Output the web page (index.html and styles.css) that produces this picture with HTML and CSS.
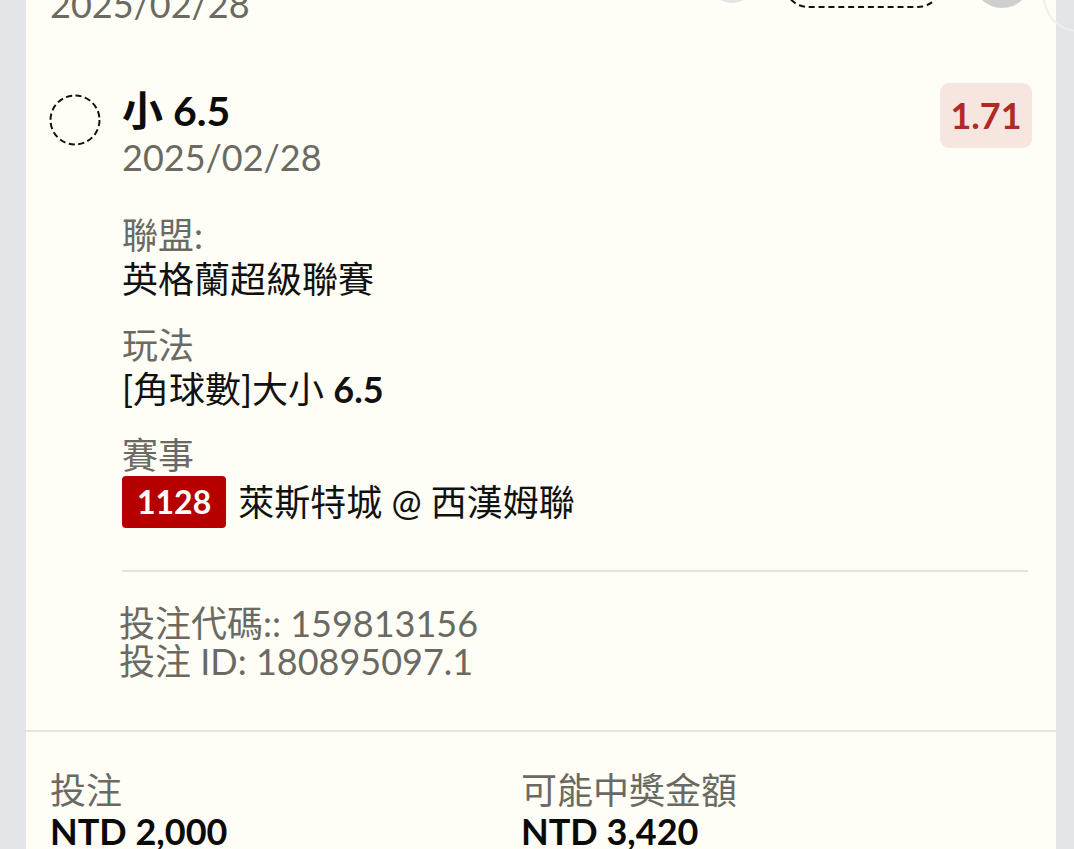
FILE: index.html
```html
<!DOCTYPE html>
<html lang="zh-Hant">
<head>
<meta charset="utf-8">
<link rel="stylesheet" href="styles.css">
</head>
<body>
<div class="page">
  <div class="card">
    <div class="prev">
      <div class="prev-date">2025/02/28</div>
    </div>

    <div class="bet">
      <svg class="check" width="52" height="52" viewBox="0 0 52 52" aria-hidden="true">
        <circle cx="26" cy="26" r="24.5" fill="none" stroke="#111" stroke-width="2" stroke-dasharray="6.2 3.4"/>
      </svg>
      <div class="bet-head">
        <div class="bet-title">小 6.5</div>
        <div class="bet-date">2025/02/28</div>
      </div>
      <div class="odds">1.71</div>

      <div class="bet-body">
        <div class="fields">
          <div class="field">
            <div class="label">聯盟:</div>
            <div class="value">英格蘭超級聯賽</div>
          </div>
          <div class="field">
            <div class="label">玩法</div>
            <div class="value">[角球數]大小 <b>6.5</b></div>
          </div>
          <div class="field">
            <div class="label">賽事</div>
            <div class="value match"><span class="match-no">1128</span><span>萊斯特城 @ 西漢姆聯</span></div>
          </div>
        </div>

        <div class="divider"></div>

        <div class="codes">
          <div>投注代碼:: 159813156</div>
          <div>投注 ID: 180895097.1</div>
        </div>
      </div>
    </div>

    <div class="summary">
      <div class="sum-col">
        <div class="label">投注</div>
        <div class="amount">NTD 2,000</div>
      </div>
      <div class="sum-col">
        <div class="label">可能中獎金額</div>
        <div class="amount">NTD 3,420</div>
      </div>
    </div>
  </div>

  <div class="float-bar">
    <span class="fb-circle fb-light"></span>
    <span class="fb-pill"></span>
    <span class="fb-circle fb-dark"></span>
    <span class="fb-ring"></span>
  </div>
</div>
</body>
</html>
```

FILE: styles.css
```css
* { box-sizing: border-box; }
html, body {
  margin: 0;
  padding: 0;
  background: #e4e5e8;
  overflow: hidden;
}
body {
  font-family: Lato, "Noto Sans CJK TC", sans-serif;
  color: #111;
}
.page {
  position: relative;
  width: 1074px;
  height: 849px;
  overflow: hidden;
}
.card {
  margin: -22px 18px 0 26px;
  background: #fefdf6;
  height: 1000px;
}
.prev {
  padding: 0 24px;
  height: 109px;
}
.prev-date {
  font-size: 36px;
  line-height: 44px;
  color: #6a6a62;
  padding-top: 4px;
}
.bet {
  display: grid;
  grid-template-columns: 52px 1fr auto;
  column-gap: 20px;
  align-items: start;
  padding: 0 24px 0 23px;
}
.check {
  display: block;
  margin-top: 7px;
}
.bet-head {
  min-width: 0;
  padding-left: 1px;
}
.bet-title {
  font-size: 41px;
  font-weight: 700;
  line-height: 48px;
  color: #0c0c0c;
}
.bet-date {
  font-size: 36px;
  line-height: 44px;
  color: #6a6a62;
}
.bet-body {
  grid-column: 2 / 4;
  padding-left: 1px;
  padding-bottom: 50px;
}
.fields {
  margin-top: 35px;
  display: flex;
  flex-direction: column;
  gap: 24px;
}
.label {
  font-size: 36px;
  line-height: 42px;
  color: #6a6a62;
}
.field .label {
  margin-bottom: 2px;
}
.value {
  font-size: 36px;
  line-height: 42px;
  color: #111;
}
.value b { font-weight: 700; }
.match {
  display: flex;
  align-items: center;
  gap: 12px;
  margin-top: -2px;
}
.match-no {
  background: #b60000;
  color: #fff;
  font-weight: 700;
  font-size: 32px;
  line-height: 52px;
  padding: 0 15px;
  border-radius: 4px;
}
.divider {
  height: 2px;
  background: #e4e2dc;
  margin: 42px 4px 0 0;
}
.codes {
  margin-top: 32px;
  margin-left: -3px;
  font-size: 36px;
  line-height: 38px;
  color: #6a6a62;
}
.odds {
  margin-top: -4px;
  background: #f6e6df;
  color: #b02a25;
  font-size: 36px;
  font-weight: 700;
  width: 92px;
  height: 65px;
  line-height: 65px;
  text-align: center;
  border-radius: 9px;
}
.summary {
  border-top: 2px solid #e6e4de;
  display: grid;
  grid-template-columns: 471px 1fr;
  padding: 37px 24px 0 24px;
}
.amount {
  font-size: 36px;
  font-weight: 700;
  line-height: 40px;
  color: #0a0a0a;
}
.float-bar {
  position: absolute;
  top: 0;
  left: 0;
  width: 1074px;
  height: 40px;
}
.fb-circle {
  position: absolute;
  border-radius: 50%;
}
.fb-light {
  left: 710px;
  top: -43px;
  width: 44px;
  height: 46px;
  background: #e3e3e3;
}
.fb-dark {
  left: 972px;
  top: -54px;
  width: 60px;
  height: 62px;
  background: #cfcfcf;
}
.fb-pill {
  position: absolute;
  left: 784px;
  top: -41px;
  width: 158px;
  height: 49px;
  border: 2px dashed #111;
  border-radius: 24px;
}
.fb-ring {
  position: absolute;
  left: 1043px;
  top: -40px;
  width: 70px;
  height: 72px;
  border: 2px solid #eeeeea;
  border-radius: 50%;
}
```
